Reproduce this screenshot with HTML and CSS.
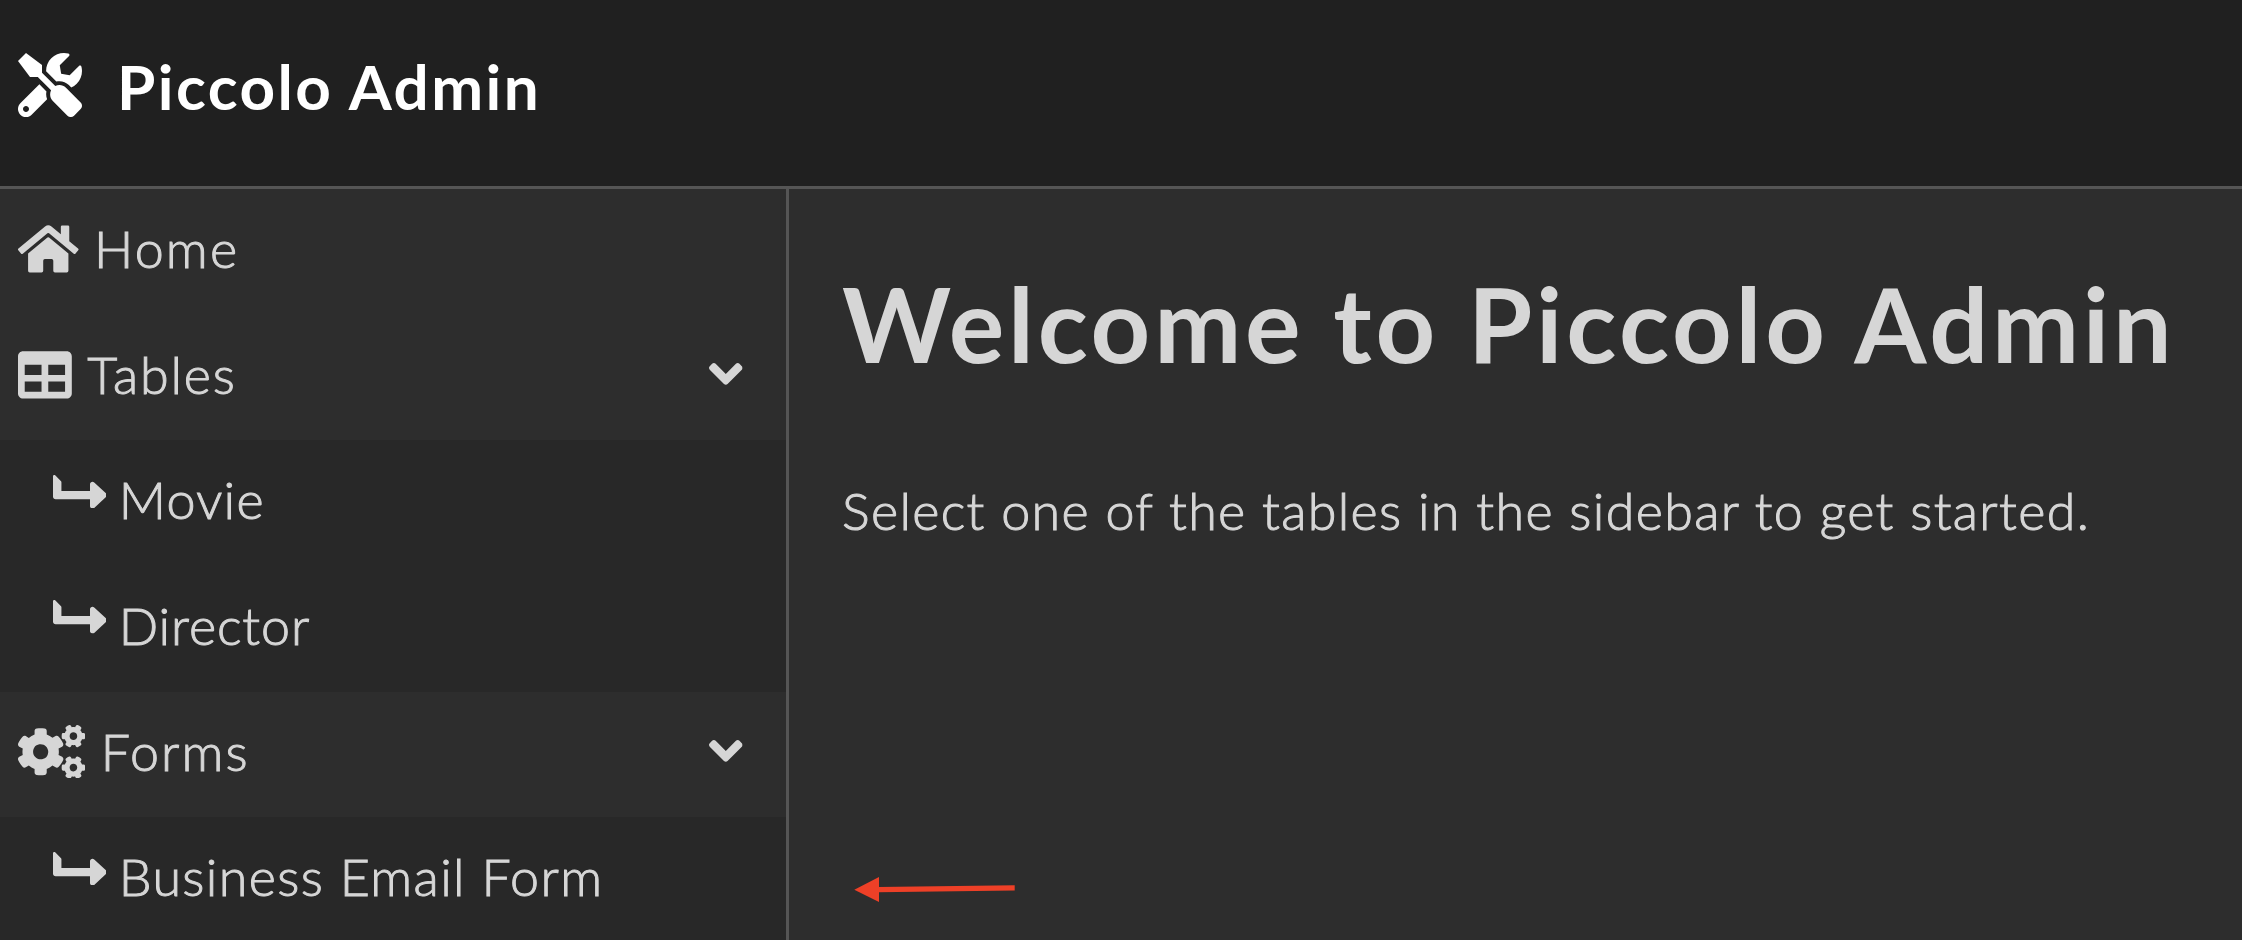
FILE: index.html
```
<!DOCTYPE html>
<html lang="en">
<head>
<meta charset="utf-8">
<title>Piccolo Admin</title>
<link rel="stylesheet" href="styles.css">
</head>
<body>
<svg class="sprite" aria-hidden="true">
  <symbol id="turn" viewBox="0 0 512 320"><path transform="translate(512 0) rotate(90)" d="M313.553 119.669L209.587 7.666c-9.485-10.214-25.676-10.229-35.174 0L70.438 119.669C56.232 134.969 67.062 160 88.025 160H152v272H68.024a11.996 11.996 0 0 0-8.485 3.515l-56 56C-4.021 499.074 1.333 512 12.024 512H208c13.255 0 24-10.745 24-24V160h63.966c20.878 0 31.851-24.969 17.587-40.331z"/></symbol>
  <symbol id="angle" viewBox="0 0 320 512"><path d="M143 352.3L7 216.3c-9.4-9.4-9.4-24.6 0-33.9l22.6-22.6c9.4-9.4 24.6-9.4 33.9 0l96.4 96.4 96.4-96.4c9.4-9.4 24.6-9.4 33.9 0l22.6 22.6c9.4 9.4 9.4 24.6 0 33.9l-136 136c-9.2 9.4-24.4 9.4-33.8 0z"/></symbol>
</svg>
<div class="app">
  <header class="topbar">
    <svg class="logo" viewBox="0 0 512 512"><path d="M501.1 395.7L384 278.6c-23.1-23.1-57.6-27.6-85.4-13.9L192 158.1V96L64 0 0 64l96 128h62.1l106.6 106.6c-13.6 27.8-9.2 62.3 13.9 85.4l117.1 117.1c14.6 14.6 38.2 14.6 52.7 0l52.7-52.7c14.5-14.6 14.5-38.2 0-52.7zM331.7 225c28.3 0 54.9 11 74.9 31l19.4 19.4c15.8-6.9 30.8-16.5 43.8-29.5 37.1-37.1 49.7-89.3 37.9-136.7-2.2-9-13.5-12.1-20.1-5.5l-74.4 74.4-67.9-11.3L334 98.9l74.4-74.4c6.6-6.6 3.4-17.9-5.7-20.2-47.4-11.7-99.6.9-136.6 37.9-28.5 28.5-41.9 66.1-41.2 103.6l82.1 82.1c8.1-1.9 16.5-2.9 24.7-2.9zm-103.9 82l-56.7-56.7L18.7 402.8c-25 25-25 65.5 0 90.5s65.5 25 90.5 0l123.6-123.6c-7.6-19.9-9.9-41.6-5-62.7zM64 472c-13.2 0-24-10.8-24-24 0-13.3 10.7-24 24-24s24 10.7 24 24c0 13.2-10.7 24-24 24z"/></svg>
    <span class="brand">Piccolo Admin</span>
  </header>
  <div class="body">
    <nav class="sidebar">
      <a class="item">
        <svg class="icon icon-home" viewBox="0 0 576 512"><path d="M280.37 148.26L96 300.11V464a16 16 0 0 0 16 16l112.06-.29a16 16 0 0 0 15.92-16V368a16 16 0 0 1 16-16h64a16 16 0 0 1 16 16v95.64a16 16 0 0 0 16 16.05L464 480a16 16 0 0 0 16-16V300L295.67 148.26a12.19 12.19 0 0 0-15.3 0zM571.6 251.47L488 182.56V44.05a12 12 0 0 0-12-12h-56a12 12 0 0 0-12 12v72.61L318.47 43a48 48 0 0 0-61 0L4.34 251.47a12 12 0 0 0-1.6 16.9l25.5 31A12 12 0 0 0 45.15 301l235.22-193.74a12.19 12.19 0 0 1 15.3 0L530.9 301a12 12 0 0 0 16.9-1.6l25.5-31a12 12 0 0 0-1.7-16.93z"/></svg>
        <span class="label home">Home</span>
      </a>
      <a class="item">
        <svg class="icon icon-table" viewBox="0 0 512 512"><path d="M464 32H48C21.49 32 0 53.49 0 80v352c0 26.51 21.49 48 48 48h416c26.51 0 48-21.49 48-48V80c0-26.51-21.49-48-48-48zM224 416H64v-96h160v96zm0-160H64v-96h160v96zm224 160H288v-96h160v96zm0-160H288v-96h160v96z"/></svg>
        <span class="label tables">Tables</span>
        <svg class="icon icon-angle"><use href="#angle"/></svg>
      </a>
      <a class="item sub"><svg class="icon icon-turn"><use href="#turn"/></svg><span class="label movie">Movie</span></a>
      <a class="item sub"><svg class="icon icon-turn"><use href="#turn"/></svg><span class="label director">Director</span></a>
      <a class="item">
        <svg class="icon icon-cogs" viewBox="0 0 640 512"><path id="small-cog" fill-rule="evenodd" d="M512.1 191l-8.2 14.3c-3 5.3-9.4 7.5-15.1 5.4-11.8-4.4-22.6-10.7-32.1-18.6-4.6-3.8-5.8-10.5-2.8-15.7l8.2-14.3c-6.9-8-12.3-17.3-15.9-27.4h-16.5c-6 0-11.2-4.3-12.2-10.3-2-12-2.1-24.6 0-37.1 1-6 6.2-10.4 12.2-10.4h16.5c3.6-10.1 9-19.4 15.9-27.4l-8.2-14.3c-3-5.2-1.9-11.9 2.8-15.7 9.5-7.9 20.4-14.2 32.1-18.6 5.7-2.1 12.1.1 15.1 5.4l8.2 14.3c10.5-1.9 21.2-1.9 31.7 0L552 6.3c3-5.3 9.4-7.5 15.1-5.4 11.8 4.4 22.6 10.7 32.1 18.6 4.6 3.8 5.8 10.5 2.8 15.7l-8.2 14.3c6.9 8 12.3 17.3 15.9 27.4h16.5c6 0 11.2 4.3 12.2 10.3 2 12 2.1 24.6 0 37.1-1 6-6.2 10.4-12.2 10.4h-16.5c-3.6 10.1-9 19.4-15.9 27.4l8.2 14.3c3 5.2 1.9 11.9-2.8 15.7-9.5 7.9-20.4 14.2-32.1 18.6-5.7 2.1-12.1-.1-15.1-5.4l-8.2-14.3c-10.4 1.9-21.2 1.9-31.7 0zm-10.5-58.8c38.5 29.6 82.4-14.3 52.8-52.8-38.5-29.7-82.4 14.3-52.8 52.8z"/><use href="#small-cog" y="299.9"/><path fill-rule="evenodd" d="M386.3 286.1l33.7 16.8c10.1 5.8 14.5 18.1 10.5 29.1-8.9 24.2-26.4 46.4-42.6 65.8-7.4 8.9-20.2 11.1-30.3 5.3l-29.1-16.8c-16 13.7-34.6 24.6-54.9 31.7v33.6c0 11.6-8.3 21.6-19.7 23.6-24.6 4.2-50.4 4.4-75.9 0-11.5-2-20-11.9-20-23.6V418c-20.3-7.2-38.9-18-54.9-31.7L74 403c-10 5.8-22.9 3.6-30.3-5.3-16.2-19.4-33.3-41.6-42.2-65.7-4-10.9.4-23.2 10.5-29.1l33.3-16.8c-3.9-20.9-3.9-42.4 0-63.4L12 205.8c-10.1-5.8-14.6-18.1-10.5-29 8.9-24.2 26-46.4 42.2-65.8 7.4-8.9 20.2-11.1 30.3-5.3l29.1 16.8c16-13.7 34.6-24.6 54.9-31.7V57.1c0-11.5 8.2-21.5 19.6-23.5 24.6-4.2 50.5-4.4 76-.1 11.5 2 20 11.9 20 23.6v33.6c20.3 7.2 38.9 18 54.9 31.7l29.1-16.8c10-5.8 22.9-3.6 30.3 5.3 16.2 19.4 33.2 41.6 42.1 65.8 4 10.9.1 23.2-10 29.1l-33.7 16.8c3.9 21 3.9 42.5 0 63.5zm-117.6 21.1c59.2-77-28.7-164.9-105.7-105.7-59.2 77 28.7 164.9 105.7 105.7z"/></svg>
        <span class="label forms">Forms</span>
        <svg class="icon icon-angle"><use href="#angle"/></svg>
      </a>
      <a class="item sub"><svg class="icon icon-turn"><use href="#turn"/></svg><span class="label business">Business Email Form</span></a>
    </nav>
    <main class="content">
      <h1 class="title">Welcome to Piccolo Admin</h1>
      <p class="intro">Select one of the tables in the sidebar to get started.</p>
    </main>
  </div>
</div>
<svg class="pointer" viewBox="0 0 164 28"><path d="M0.3 13.8L25 1v25z"/><path d="M24 11.1L160.700 9.300v5.200L24 16.200z"/></svg>
</body>
</html>
```
FILE: styles.css
```
* { box-sizing: border-box; }
body {
  margin: 0;
  background: #2d2d2d;
  color: #d6d6d6;
  font: 300 52px/62.4px Lato, "Open Sans", sans-serif;
}
.sprite { display: none; }
.app { display: flex; flex-direction: column; height: 940px; overflow: hidden; }
.topbar {
  display: flex;
  align-items: flex-start;
  flex: 0 0 189px;
  padding: 48px 18px 0;
  gap: 35px;
  background: #202020;
  border-bottom: 3px solid #555;
  color: #fff;
}
.logo { width: 64px; height: 64px; margin-top: 5px; fill: currentColor; }
.brand { font-size: 62px; font-weight: 700; line-height: 76px; letter-spacing: 2.43px; }
.body { display: flex; flex: 1; min-height: 0; }
.sidebar { flex: 0 0 789px; border-right: 3px solid #555; }
.item { display: flex; align-items: flex-start; height: 125.67px; padding: 28px 43px 0 18px; }
.sub { padding-left: 52.5px; background: #282828; }
.icon { flex: none; height: 53.8px; margin: 5px 15.5px 0 0; fill: currentColor; }
.icon-home { width: 60.5px; }
.icon-table { width: 53.8px; }
.icon-cogs { width: 67.2px; }
.icon-turn { width: 53.8px; height: 33.6px; margin: 6.500px 12.5px 0 0; }
.icon-angle { width: 33.6px; margin: 4.500px 0 0 auto; }
.label, .intro { -webkit-text-stroke: 1px currentColor; }
.home { letter-spacing: 2.2px; }
.tables { letter-spacing: 1.8px; }
.movie { letter-spacing: 1.3px; }
.director { letter-spacing: 0.9px; }
.forms { letter-spacing: 2.1px; }
.business { letter-spacing: 1.38px; }
.content { flex: 1; padding: 72.4px 0 0 53px; }
.title { margin: 0 0 92.5px; font-size: 104px; font-weight: 700; line-height: 124.8px; letter-spacing: 3.77px; white-space: nowrap; }
.intro { margin: 0; letter-spacing: 1.35px; white-space: nowrap; }
.pointer { position: absolute; left: 854px; top: 875.5px; width: 164px; height: 28px; fill: #ee4027; }
```
